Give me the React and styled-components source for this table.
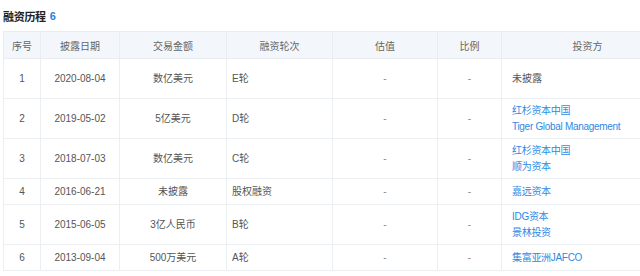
import React from 'react'
import styled, { createGlobalStyle } from 'styled-components'

const GlobalStyle = createGlobalStyle`
  html, body {
    margin: 0;
    padding: 0;
    background: #fff;
    overflow: hidden;
  }
  body {
    font-family: "Liberation Sans", "Noto Sans CJK SC", sans-serif;
    color: #333;
  }
`

const Page = styled.div`
  width: 640px;
  height: 276px;
  overflow: hidden;
  padding: 0 0 0 3px;
  box-sizing: border-box;
`

const Title = styled.h3`
  margin: 0;
  height: 31px;
  display: flex;
  align-items: center;
  font-size: 11px;
  font-weight: bold;
  color: #222;
  letter-spacing: -0.3px;
`

const Count = styled.span`
  color: #1f7fe0;
  margin-left: 4px;
`

const Table = styled.table`
  width: 670px;
  table-layout: fixed;
  border-collapse: collapse;
  font-size: 10px;
`

const HeadCell = styled.th`
  height: 26px;
  padding: 0;
  background: #f3f7fb;
  border: 1px solid #e9edf1;
  font-weight: normal;
  color: #666;
  text-align: center;
`

const Row = styled.tr`
  height: ${p => (p.$tall ? '40px' : '26px')};
`

const Cell = styled.td`
  padding: 0 ${p => p.$pad || 0}px;
  border: 1px solid #eceff2;
  text-align: ${p => p.$align || 'center'};
  vertical-align: middle;
  line-height: 16px;
  color: ${p => (p.$muted ? '#888' : '#555')};
`

const Link = styled.div`
  color: #3088e4;
  letter-spacing: -0.3px;
`

const cols = [37, 79, 107, 106, 105, 64, 172]
const heads = ['序号', '披露日期', '交易金额', '融资轮次', '估值', '比例', '投资方']

const rows = [
  { date: '2020-08-04', amount: '数亿美元', round: 'E轮', investors: ['未披露'], plain: true, tall: true },
  { date: '2019-05-02', amount: '5亿美元', round: 'D轮', investors: ['红杉资本中国', 'Tiger Global Management'] },
  { date: '2018-07-03', amount: '数亿美元', round: 'C轮', investors: ['红杉资本中国', '顺为资本'] },
  { date: '2016-06-21', amount: '未披露', round: '股权融资', investors: ['嘉远资本'] },
  { date: '2015-06-05', amount: '3亿人民币', round: 'B轮', investors: ['IDG资本', '景林投资'] },
  { date: '2013-09-04', amount: '500万美元', round: 'A轮', investors: ['集富亚洲JAFCO'] },
]

export default function App() {
  return (
    <Page>
      <GlobalStyle />
      <Title>
        融资历程<Count>6</Count>
      </Title>
      <Table>
        <colgroup>
          {cols.map((w, i) => (
            <col key={i} style={{ width: w }} />
          ))}
        </colgroup>
        <thead>
          <tr>
            {heads.map(h => (
              <HeadCell key={h}>{h}</HeadCell>
            ))}
          </tr>
        </thead>
        <tbody>
          {rows.map((r, i) => (
            <Row key={r.date} $tall={r.tall || r.investors.length > 1}>
              <Cell>{i + 1}</Cell>
              <Cell>{r.date}</Cell>
              <Cell>{r.amount}</Cell>
              <Cell $align="left" $pad={5}>{r.round}</Cell>
              <Cell $muted>-</Cell>
              <Cell $muted>-</Cell>
              <Cell $align="left" $pad={10}>
                {r.plain
                  ? r.investors[0]
                  : r.investors.map(n => <Link key={n}>{n}</Link>)}
              </Cell>
            </Row>
          ))}
        </tbody>
      </Table>
    </Page>
  )
}
